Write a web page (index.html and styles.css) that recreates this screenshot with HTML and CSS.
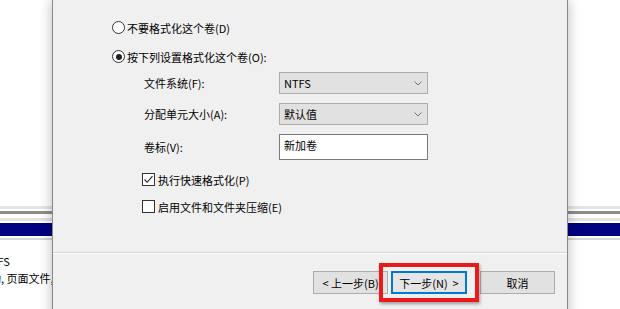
FILE: index.html
```html
<!DOCTYPE html>
<html lang="zh-CN">
<head>
    <meta charset="UTF-8">
    <meta name="viewport" content="width=device-width, initial-scale=1.0">
    <title>格式化分区</title>
<link rel="stylesheet" href="styles.css">
</head>
<body>
    <div id="screen">
        <!-- 后面的磁盘管理窗口 -->
        <div class="desk">
            <div class="desk-blank"></div>
            <div class="desk-rule"></div>
            <div class="desk-bar"></div>
            <div class="desk-info">
                <p class="cut1">NTFS</p>
                <p class="cut2">动, 页面文件, 故障转储</p>
            </div>
        </div>

        <!-- 新建简单卷向导 -->
        <div class="dialog">
            <div class="body">
                <label class="opt first">
                    <span class="radio"></span>
                    <span>不要格式化这个卷(D)</span>
                </label>
                <label class="opt second">
                    <span class="radio on"></span>
                    <span>按下列设置格式化这个卷(O):</span>
                </label>

                <div class="form">
                    <span class="lbl">文件系统(F):</span>
                    <div class="combo"><span>NTFS</span><svg class="arrow" width="8" height="5" viewBox="0 0 8 5"><polyline points="0.5,0.5 4,4 7.5,0.5" fill="none" stroke="#707070" stroke-width="1"/></svg></div>

                    <span class="lbl">分配单元大小(A):</span>
                    <div class="combo"><span>默认值</span><svg class="arrow" width="8" height="5" viewBox="0 0 8 5"><polyline points="0.5,0.5 4,4 7.5,0.5" fill="none" stroke="#707070" stroke-width="1"/></svg></div>

                    <span class="lbl">卷标(V):</span>
                    <div class="edit">新加卷</div>
                </div>

                <label class="chk first">
                    <span class="box">
                        <svg width="11" height="11" viewBox="0 0 11 11"><path d="M1.5 5.5 L4.2 8.3 L9.5 2.2" fill="none" stroke="#222" stroke-width="1.1"/></svg>
                    </span>
                    <span>执行快速格式化(P)</span>
                </label>
                <label class="chk">
                    <span class="box"></span>
                    <span>启用文件和文件夹压缩(E)</span>
                </label>
            </div>

            <div class="foot">
                <button class="btn back">&lt; 上一步(B)</button>
                <button class="btn next">下一步(N) &nbsp;&gt;</button>
                <button class="btn cancel">取消</button>
            </div>
        </div>

        <!-- 红色标注框 -->
        <div class="mark"></div>
    </div>
</body>
</html>
```

FILE: styles.css
```css
body{
    margin: 0;
    font-family: "Noto Sans CJK SC", "Microsoft YaHei", sans-serif;
    font-size: 11px;
    color: #000;
}
#screen{
    position: relative;
    width: 620px;
    height: 309px;
    overflow: hidden;
    background-color: #fff;
}

/* 背景窗口 */
.desk-blank{
    height: 206px;
}
.desk-rule{
    height: 3px;
    background-color: #e4e4e4;
    border-bottom: 2px solid #fff;
    box-shadow: 0 3px 0 #8c8c8c;
    margin-bottom: 10px;
}
.desk-bar{
    height: 13px;
    background-color: #000080;
    border-top: 2px solid #fff;
    box-shadow: 0 -3px 0 #e2e2e2, 0 2px 0 #fff, 0 4px 0 #d6d6d6;
}
.desk-info{
    padding-top: 17px;
}
.desk-info p{
    margin: 0;
    line-height: 17px;
    white-space: nowrap;
}
.cut1{
    text-indent: -17px;
}
.cut2{
    text-indent: -10px;
}

/* 对话框 */
.dialog{
    position: absolute;
    left: 52px;
    top: 0;
    width: 514px;
    height: 330px;
    background-color: #f0f0f0;
    border-left: 1px solid #8a8a8a;
    border-right: 1px solid #8a8a8a;
    box-shadow: 0 0 12px rgba(0,0,0,0.28);
}
.body{
    height: 252px;
    padding-left: 59px;
    box-sizing: border-box;
    padding-top: 20px;
}
.opt, .chk{
    display: flex;
    align-items: center;
    height: 15px;
}
.opt.second{
    margin-top: 14px;
}
.radio{
    width: 11px;
    height: 11px;
    border: 1px solid #333;
    border-radius: 50%;
    background-color: #fff;
    margin-right: 2px;
    position: relative;
}
.radio.on::after{
    content: "";
    position: absolute;
    left: 2.5px;
    top: 2.5px;
    width: 6px;
    height: 6px;
    border-radius: 50%;
    background-color: #222;
}

.form{
    display: grid;
    grid-template-columns: 135px 149px;
    grid-template-rows: 22px 22px 26px;
    row-gap: 9px;
    margin-top: 8px;
    margin-left: 32px;
    align-items: center;
}
.combo{
    height: 22px;
    box-sizing: border-box;
    border: 1px solid #adadad;
    background-color: #e1e1e1;
    display: flex;
    align-items: center;
    justify-content: space-between;
    padding: 0 5px 0 4px;
}
.edit{
    height: 26px;
    box-sizing: border-box;
    border: 1px solid #7a7a7a;
    background-color: #fff;
    padding: 2px 4px;
    line-height: 16px;
}

.chk{
    margin-left: 30px;
    margin-top: 12px;
}
.box{
    width: 11px;
    height: 11px;
    border: 1px solid #333;
    background-color: #fff;
    margin-right: 3px;
    display: flex;
}

/* 底部按钮 */
.foot{
    border-top: 1px solid #d4d4d4;
    box-shadow: inset 0 1px 0 #fff;
    padding: 18px 0 0 260px;
    display: flex;
}
.btn{
    height: 23px;
    box-sizing: border-box;
    border: 1px solid #adadad;
    background-color: #e1e1e1;
    font-family: inherit;
    font-size: 11px;
    color: #000;
    padding: 0;
}
.back{
    width: 75px;
}
.next{
    width: 76px;
    margin-left: 3px;
    border: 2px solid #0078d7;
    background-color: #e5e5e5;
}
.cancel{
    width: 75px;
    margin-left: 13px;
}

.mark{
    position: absolute;
    left: 379px;
    top: 263px;
    width: 100px;
    height: 39px;
    box-sizing: border-box;
    border: 4px solid #ea1a1a;
    box-shadow: 1px 2px 3px rgba(0,0,0,0.35);
}
```
